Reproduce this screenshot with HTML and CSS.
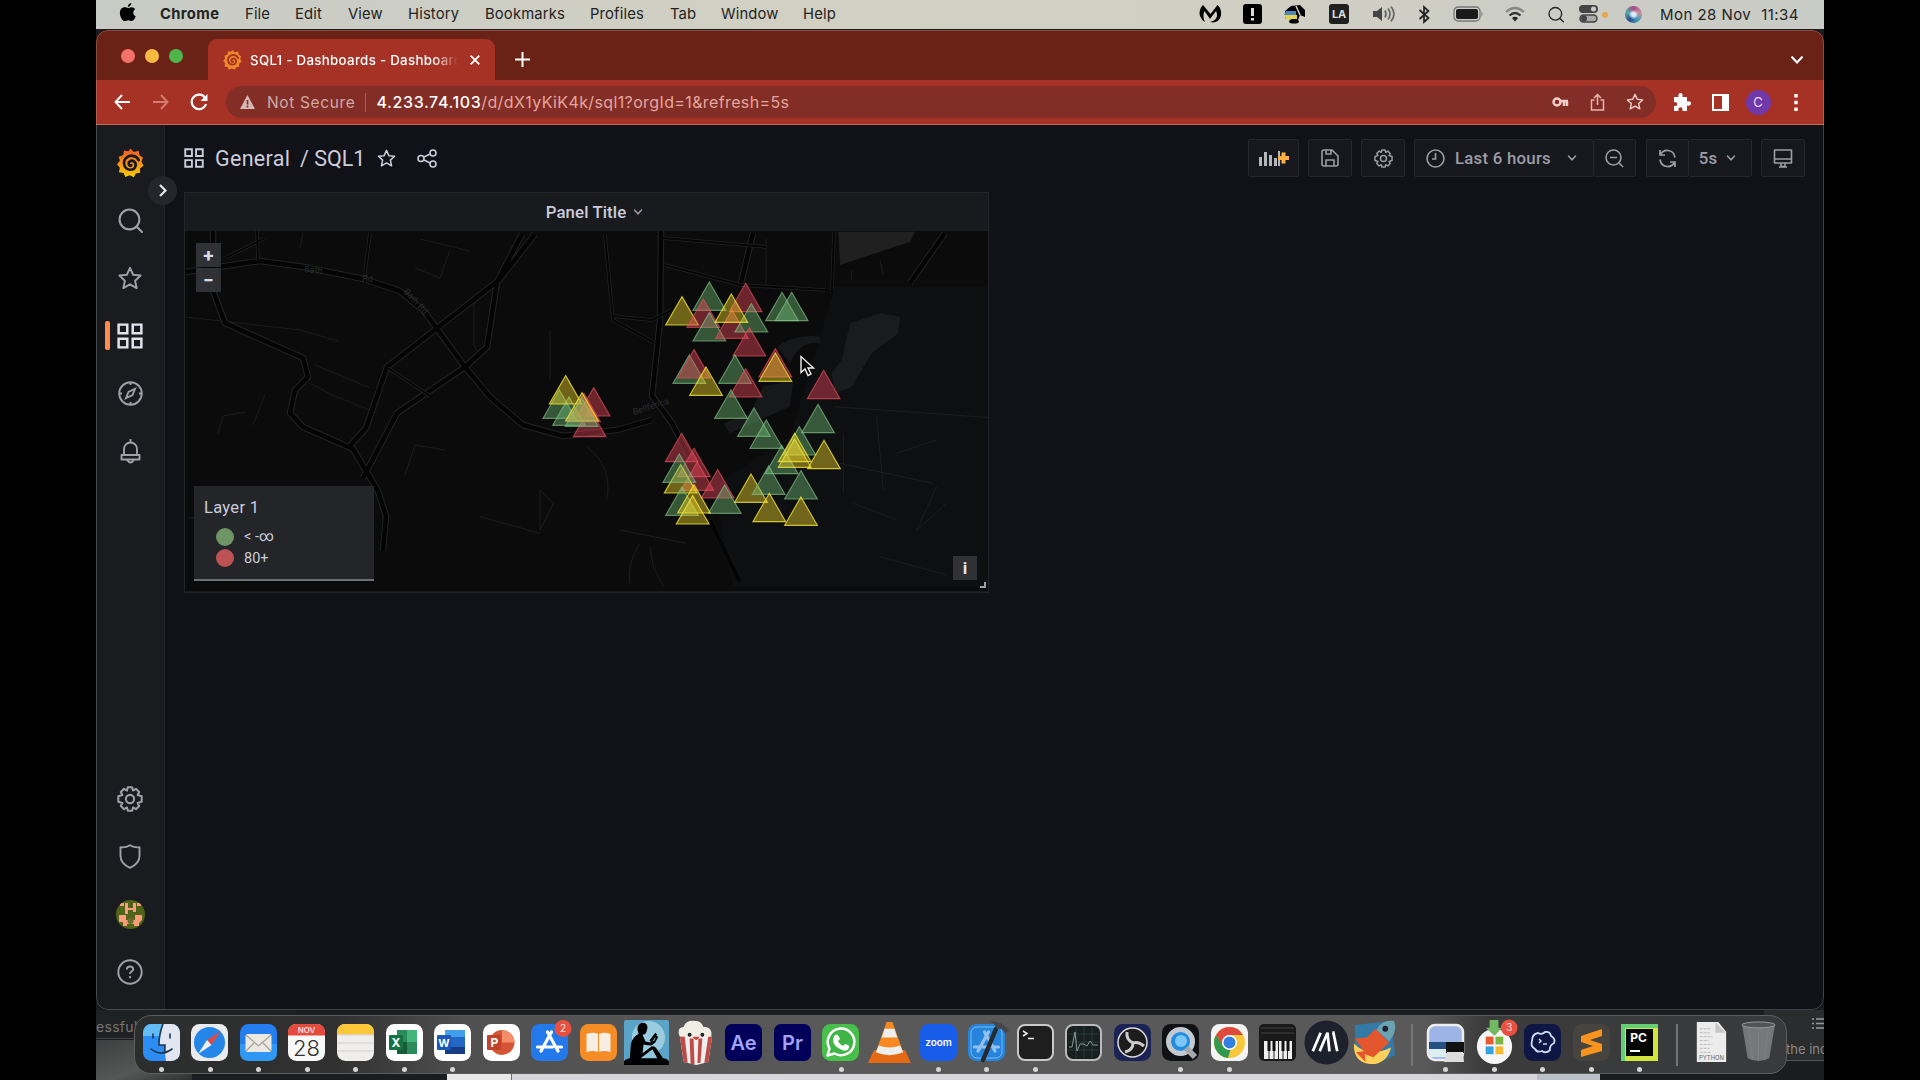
FILE: index.html
```html
<!DOCTYPE html>
<html lang="en">
<head>
<meta charset="utf-8">
<title>SQL1 - Dashboards - Dashboards</title>
<link rel="stylesheet" href="styles.css">
</head>
<body>
<svg width="0" height="0" class="defs">
  <defs>
    <linearGradient id="flame" x1="0" y1="0" x2="0" y2="1"><stop offset="0" stop-color="#f05a28"/><stop offset="1" stop-color="#fbca0a"/></linearGradient>
    <symbol id="grafana" viewBox="0 0 28 30">
      <path fill="url(#flame)" d="M14 0l3.400 3.600 5.200-1.200.7 4.600 3.600 2.300-1.500 4.200 2.200 4.300-3.800 2.800.3 4.600-4.600.6-2 4-4.300-2-4.600 1.800-1.800-4.200-4.800-.7 1-4.800-3-3.600 3-3.600L1.800 8.600l4.700-1.800.8-4.800 4.500.8z"/>
      <path fill="none" stroke="#17181c" stroke-width="2.800" stroke-linecap="round" d="M22.500 12C20 6.800 13 6 9.300 10c-4 4.300-1.800 11.500 4.500 12 5 .3 7.500-5.800 3.700-8.600-2.800-2-6.300.6-5 3.600.6 1.300 2 1.200 2.400.3"/>
    </symbol>
    <symbol id="grafana-tab" viewBox="0 0 28 30">
      <path fill="#ee8a2c" d="M14 0l3.400 3.600 5.200-1.200.7 4.600 3.600 2.300-1.500 4.200 2.200 4.300-3.800 2.800.3 4.600-4.600.6-2 4-4.300-2-4.600 1.800-1.800-4.200-4.800-.7 1-4.800-3-3.600 3-3.600L1.800 8.600l4.700-1.800.8-4.800 4.500.8z"/>
      <path fill="none" stroke="#a53225" stroke-width="2.800" stroke-linecap="round" d="M22.500 12C20 6.800 13 6 9.300 10c-4 4.300-1.800 11.500 4.500 12 5 .3 7.500-5.800 3.700-8.600-2.800-2-6.300.6-5 3.600.6 1.300 2 1.200 2.400.3"/>
    </symbol>
    <symbol id="star" viewBox="0 0 24 24"><path fill="none" stroke="currentColor" stroke-width="1.900" stroke-linejoin="round" d="M12 1.800l3 6.600 7.200.8-5.300 4.900 1.500 7.100L12 17.600l-6.400 3.600 1.500-7.100L1.800 9.200 9 8.400z"/></symbol>
    <symbol id="grid" viewBox="0 0 24 24"><path fill="none" stroke="currentColor" stroke-width="2.300" d="M1.500 1.500h8v8h-8zM14.500 1.500h8v8h-8zM1.500 14.500h8v8h-8zM14.500 14.500h8v8h-8z"/></symbol>
    <symbol id="search" viewBox="0 0 24 24"><g fill="none" stroke="currentColor" stroke-width="2" stroke-linecap="round"><circle cx="11" cy="11" r="9.500"/><path d="M18 18l5 5"/></g></symbol>
    <symbol id="down" viewBox="0 0 10 10"><path fill="none" stroke="currentColor" stroke-width="1.500" stroke-linecap="round" d="M1.500 3L5 6.800 8.500 3"/></symbol>
    <symbol id="gear" viewBox="0 0 24 24"><g fill="none" stroke="currentColor" stroke-width="1.900" stroke-linejoin="round"><circle cx="12" cy="12" r="3.800"/><path d="M10 1.200h4l.8 3 2.700-1.600 3 3L19 8.300l3.800 1.200v5L19 15.700l1.500 2.700-3 3-2.700-1.600-.8 3h-4l-.8-3-2.700 1.600-3-3L5 15.700 1.200 14.500v-5L5 8.300 3.500 5.600l3-3 2.700 1.600z"/></g></symbol>
    <symbol id="appstore" viewBox="0 0 37 37"><g stroke="#fff" stroke-width="3.200" stroke-linecap="round"><path d="M20.500 8L10 27M16.500 8L27 27M6.500 23h15M26 23h4.500"/></g></symbol>
    <path id="tri" d="M0 2L49 87H-49z"/>
  </defs>
</svg>

<div class="screen">
  <div class="backdrop">
    <div class="behind-left"><span>essful</span></div>
    <div class="behind-wall"></div>
    <div class="behind-sheet"></div>
    <div class="behind-right">
      <svg width="12" height="14" viewBox="0 0 12 14"><path stroke="#999" stroke-width="1.500" d="M0 2h2M4 2h8M0 6.500h2M4 6.500h8M0 11h2M4 11h8"/></svg>
      <span>the inc</span>
    </div>
  </div>

  <header class="menubar">
    <svg class="apple" width="18" height="19" viewBox="0 0 18 19"><path d="M12.300 0c.2 1.700-1.400 3.800-3.400 3.900C8.600 2.200 10.300.2 12.300 0zM9 5c.9 0 1.900-.9 3.500-.8 1.700.1 3 .8 3.700 2-3 1.900-2.400 5.800.6 7-.8 2.100-2.300 4.700-4 4.800-1.300.1-1.900-.8-3.500-.8s-2.200.8-3.500.8C3.200 18 .9 13.300.9 9.900c0-3.600 2.300-5.500 4.500-5.600C6.900 4.200 8.100 5 9 5z"/></svg>
    <nav class="menus"><b>Chrome</b><span>File</span><span>Edit</span><span>View</span><span>History</span><span>Bookmarks</span><span>Profiles</span><span>Tab</span><span>Window</span><span>Help</span></nav>
    <div class="status">
      <svg width="23" height="20" viewBox="0 0 23 20"><path d="M4 1C1 4-.5 9 1.500 13c1 2 2.500 4 4.500 5C4 14 4 10 5.500 7l5.500 8 6-8c2 4 1 8-3 10l-3 1c5 1.500 9-1 10.500-5C23 9 22 4 18.500 1l-7 9z"/></svg>
      <svg width="19" height="20" viewBox="0 0 19 20"><rect width="19" height="20" rx="3"/><path stroke="#ddd" stroke-width="3" d="M9.500 4v8M9.500 14v2.500"/></svg>
      <svg width="23" height="20" viewBox="0 0 23 20"><path d="M8 2l9-1 5 5v7l-5-2-2 5h-5l-8-2V7z"/><path fill="#4e84bd" d="M3 7h10v4H1z"/><path fill="#e5d34c" d="M1 11h13v4H3z"/><path stroke="#d0d0c5" stroke-width="1.500" d="M13 2l4 9"/><ellipse cx="11" cy="17.500" rx="5" ry="2"/></svg>
      <span class="la">LA</span>
      <svg width="24" height="18" viewBox="0 0 24 18"><path fill="#444" d="M1 6h4l5-4v14l-5-4H1z"/><path fill="none" stroke="#666" stroke-width="1.700" d="M13 5.500q2 3.500 0 7M16 3.500q4 5.500 0 11M19 1.500q6 7.500 0 15"/></svg>
      <svg width="12" height="19" viewBox="0 0 12 19"><path fill="none" stroke="#222" stroke-width="1.700" d="M1.500 5l9 8-4.500 4V2l4.500 4-9 8"/></svg>
      <svg width="31" height="16" viewBox="0 0 31 16"><rect x="1" y="1" width="26" height="14" rx="4" fill="none" stroke="#777" stroke-width="1.300"/><rect x="3" y="3" width="22" height="10" rx="2" fill="#1a1a1a"/><path fill="#777" d="M28.500 5q2 3 0 6z"/></svg>
      <svg width="20" height="15" viewBox="0 0 20 15"><g fill="none" stroke-width="2.200"><path stroke="#888" d="M1 5q9-8 18 0"/><path stroke="#333" d="M4.500 8.500q5.500-5 11 0"/></g><path fill="#222" d="M7 11q3-2.500 6 0l-3 3.500z"/></svg>
      <svg width="16" height="17" class="spotlight"><use href="#search"/></svg>
      <svg width="30" height="18" viewBox="0 0 30 18"><rect x="0" y="0" width="19" height="8" rx="4" fill="#444"/><circle cx="14.500" cy="4" r="2.500" fill="#ccc"/><rect x="1" y="10" width="17" height="7" rx="3.500" fill="#aaa" stroke="#444" stroke-width="1.500"/><circle cx="5" cy="13.500" r="3" fill="#444"/><circle cx="26" cy="10" r="3" fill="#e4a64c"/></svg>
      <i class="siri"></i>
      <span class="clock"><span>Mon 28 Nov</span><span>11:34</span></span>
    </div>
  </header>

  <main class="window">
    <div class="tabstrip">
      <div class="lights"><i></i><i></i><i></i></div>
      <div class="tab">
        <svg width="19" height="20"><use href="#grafana-tab"/></svg>
        <span>SQL1 - Dashboards - Dashboards</span>
        <svg width="10" height="10" viewBox="0 0 10 10"><path stroke="#fff" stroke-width="1.800" d="M.7.700l8.600 8.600M9.300.700L.7 9.300"/></svg>
      </div>
      <svg class="plus" width="15" height="15" viewBox="0 0 15 15"><path stroke="#fff" stroke-width="2" d="M7.500 0v15M0 7.500h15"/></svg>
      <svg class="tabs-menu" width="14" height="14"><use href="#down"/></svg>
    </div>
    <div class="toolbar">
      <svg width="17" height="16" viewBox="0 0 17 16"><path fill="none" stroke="#fff" stroke-width="1.900" d="M8 1L1.500 8 8 15M1.500 8H16"/></svg>
      <svg width="17" height="16" viewBox="0 0 17 16"><path fill="none" stroke="#d17d72" stroke-width="1.900" d="M9 1l6.500 7L9 15M15.500 8H1"/></svg>
      <svg width="18" height="18" viewBox="0 0 18 18"><path fill="none" stroke="#fff" stroke-width="2.200" d="M15.500 5.500A7.300 7.300 0 1 0 16 11"/><path fill="#fff" d="M17.500 1v7h-7z"/></svg>
      <div class="address">
        <svg width="15" height="14" viewBox="0 0 15 14"><path fill="#d6bab6" d="M7.500 0L15 14H0z"/><path stroke="#822d25" stroke-width="1.700" d="M7.500 5v4.500M7.500 10.500v2"/></svg>
        <span class="insecure">Not Secure</span><i></i>
        <span class="url"><b>4.233.74.103</b>/d/dX1yKiK4k/sql1?orgId=1&amp;refresh=5s</span>
        <div class="address-icons">
          <svg width="17" height="12" viewBox="0 0 17 12"><g fill="none" stroke="#f0cdc8" stroke-width="2.500"><circle cx="5" cy="6" r="3.500"/><path d="M8 5h8M12 5v5M15 5v5"/></g></svg>
          <svg width="15" height="18" viewBox="0 0 15 18"><path fill="none" stroke="#e9b4ad" stroke-width="1.500" d="M4.500 7H1.500v10h12V7h-3M7.500 12V1.500M4 5l3.500-3.500L11 5"/></svg>
          <svg width="18" height="18"><use href="#star"/></svg>
        </div>
      </div>
      <svg width="18" height="18" viewBox="0 0 18 18"><path fill="#fff" d="M1 4h4.500C5 1 6 0 7.500 0S10 1 9.500 4H14v4.500c3-.5 4 .5 4 2s-1 2.500-4 2V18h-4.500c.3-3-.5-3.700-2-3.700s-2.300.7-2 3.700H1v-5c2.500.3 3.300-.8 3.300-2S3.500 9 1 9z"/></svg>
      <svg width="17" height="17" viewBox="0 0 17 17"><path fill="none" stroke="#fff" stroke-width="2" d="M1 1h15v15H1z"/><path fill="#fff" d="M10 1h6v15h-6z"/></svg>
      <span class="profile">C</span>
      <svg width="4" height="17" viewBox="0 0 4 17"><path fill="#fff" d="M.3 0h3.400v3.500H.3zM.3 6.700h3.400v3.500H.3zM.3 13.500h3.400V17H.3z"/></svg>
    </div>

    <div class="app">
      <aside class="sidebar">
        <div><svg width="27" height="30"><use href="#grafana"/></svg><span class="expand"><svg width="8" height="13" viewBox="0 0 8 13"><path fill="none" stroke="#e6e6ea" stroke-width="2.200" d="M1 1l5.500 5.500L1 12"/></svg></span></div>
        <div><svg width="25" height="25"><use href="#search"/></svg></div>
        <div><svg width="26" height="25"><use href="#star"/></svg></div>
        <div class="current"><svg width="26" height="26"><use href="#grid"/></svg></div>
        <div><svg width="25" height="25" viewBox="0 0 25 25"><g fill="none" stroke="currentColor" stroke-width="1.900"><circle cx="12.500" cy="12.500" r="11.300"/><path d="M12.500 1v3M12.500 21v3M1 12.500h3M21 12.500h3M17 8l-2.500 6-6.500 3 2.500-6z"/></g></svg></div>
        <div><svg width="21" height="25" viewBox="0 0 21 25"><path fill="none" stroke="currentColor" stroke-width="1.900" stroke-linejoin="round" d="M10.500 0v3M4 15.500V10a6.500 6.500 0 0 1 13 0v5.500M1.500 16h18v4.500h-18zM7 21q3.500 5 7 0"/></svg></div>
        <div class="push"><svg width="26" height="26"><use href="#gear"/></svg></div>
        <div><svg width="22" height="25" viewBox="0 0 22 25"><path fill="none" stroke="currentColor" stroke-width="1.900" stroke-linejoin="round" d="M11 1.300q4 2.500 9.500 2v8.500q0 8-9.500 12-9.500-4-9.500-12V3.300q5.500.5 9.500-2z"/></svg></div>
        <div><svg class="round" width="29" height="29" viewBox="0 0 29 29"><path fill="#4f6418" d="M0 0h29v29H0z"/><path fill="#f79f7d" d="M4 3h4v3H4zM9 3h3v5h5V3h3v9h-3v-2h-5v4H9zM21 3h4v3h-4zM3 15h7v5h9v-5h7v5l-3 3v3h-5v-2h-7v2H7v-4H3z"/><circle cx="14.500" cy="21" r="3" fill="#6d6b27"/></svg></div>
        <div><svg width="26" height="26" viewBox="0 0 26 26"><g fill="none" stroke="currentColor" stroke-width="1.900"><circle cx="13" cy="13" r="11.700"/><path d="M9.800 10.500c0-4 6.400-4 6.400-.3 0 2.300-3.200 2-3.200 4.800M13 17v2.300"/></g></svg></div>
      </aside>

      <section class="content">
        <div class="topbar">
          <div class="crumbs">
            <svg width="20" height="20"><use href="#grid"/></svg>
            <span class="folder">General</span><span class="dash">/ SQL1</span>
            <svg width="19" height="19"><use href="#star"/></svg>
            <svg width="20" height="19" viewBox="0 0 20 19"><g fill="none" stroke="currentColor" stroke-width="1.600"><circle cx="4" cy="9.500" r="3"/><circle cx="16" cy="4" r="3"/><circle cx="16" cy="15" r="3"/><path d="M7 8l6-3M7 11l6 3"/></g></svg>
          </div>
          <div class="actions">
            <span class="btn add"><svg width="30" height="18" viewBox="0 0 30 18"><path fill="#b5b6bb" d="M0 8h3v9H0zM5 3h3v14H5zM10 6h3v11h-3zM15 9h3v8h-3zM19 2h2v15h-2z"/><path stroke="#ffad45" stroke-width="4" d="M24.500 3.500v11M19 9h11"/></svg></span>
            <span class="btn"><svg width="18" height="18" viewBox="0 0 18 18"><path fill="none" stroke="currentColor" stroke-width="1.600" stroke-linejoin="round" d="M1 3q0-2 2-2h8l6 6v8q0 2-2 2H3q-2 0-2-2zM5 1v4h5V1M5 17v-6h8v6"/></svg></span>
            <span class="btn"><svg width="19" height="19"><use href="#gear"/></svg></span>
            <span class="btn time"><svg width="19" height="19" viewBox="0 0 19 19"><g fill="none" stroke="currentColor" stroke-width="1.600"><circle cx="9.500" cy="9.500" r="8.500"/><path d="M9.500 4v6H6"/></g></svg><b>Last 6 hours</b><svg width="10" height="10"><use href="#down"/></svg></span>
            <span class="btn joined"><svg width="19" height="19" viewBox="0 0 19 19"><g fill="none" stroke="currentColor" stroke-width="1.600"><circle cx="8.500" cy="8.500" r="7.500"/><path d="M5 8.500h7M14 14l4 4"/></g></svg></span>
            <span class="btn refresh"><svg width="19" height="19" viewBox="0 0 19 19"><path fill="none" stroke="currentColor" stroke-width="1.700" d="M2 1v5h5M2 6q3-5 8-4.500 6 .5 7 7M17 18v-5h-5M17 13q-3 5-8 4.500-6-.5-7-7"/></svg></span>
            <span class="btn joined rate"><b>5s</b><svg width="10" height="10"><use href="#down"/></svg></span>
            <span class="btn"><svg width="20" height="19" viewBox="0 0 20 19"><path fill="none" stroke="currentColor" stroke-width="1.600" stroke-linejoin="round" d="M1.500 1h17v13h-17zM1.500 10h17M8 14v3.500h4V14M6 18h8"/></svg></span>
          </div>
        </div>

        <article class="panel">
          <h2>Panel Title <svg width="10" height="10"><use href="#down"/></svg></h2>
          <div class="map">
            <svg class="tiles" viewBox="185 231 803 360" width="803" height="360">
              <rect x="185" y="231" width="803" height="360" fill="#0b0b0c"/>
              <g transform="translate(480 220) scale(.33333)">
                <path fill="#0e0f10" d="M1065 200h500v900H760l-60-300 230-150z"/>
                <path fill="#202021" d="M1075 35h230l-15 30-210 70z"/>
                <path fill="#1a1b1c" d="M1110 310l90-30 60 10-5 50-80 60-60 100-50 20-10-60 30-40z"/>
                <path fill="#17181a" d="M850 500l90-20-10 80-90 40-90 40-20-30 80-30zM890 380q60-40 130-30v20q-60-10-90 60z"/>
                <path fill="none" stroke="#1c1d1d" stroke-width="3" d="M1200 120l10 45M1115 150v30M1060 560l500 35M1080 730l280 60M1090 640v180M1190 590l20 220M1370 800l-60 130 90-80M1200 1010l200 55M1250 700l120-40M1120 850l130 50M180 810v120l40-80zM0 890l180 50M420 930l200 40M320 680q80 60 60 160M480 970q-40 60-30 120M510 980l10 60 30 60"/>
              </g>
              <path fill="none" stroke="#1b1c1c" d="M185 317l45 5 70 8 38 11M315 365l55 23M218 434l5-18 22-4M188 518h30M300 248l3-15M420 239l50 12M450 250l-10 28-25-10M405 475l10-30 30 5M310 383l22 12 45 18M265 395l-12 30M474 300v45l5 10M766 239v48M550 330v50"/>
              <g fill="none" stroke-linejoin="round">
                <g stroke="#222323" stroke-width="6.500">
                  <path d="M185 272l40-6 35-5 44 6 60 12 36 12 24 20 41 56 25 30 33 28 40 11 54-6 35-10M213 231v60l12 32 78 35 5 19-13 13-5 23 13 14 50 22 25 42 8 25-3 35M348 448l18-20 21-61 112-87 36-46M363 478l34-65 68-46 22-20 10-65 25-48M661 231l-1 90-8 75 20 27 18 35M753 233l-12 50M945 233l-35 50"/>
                  <path d="M710 520l20 42 10 20" stroke-width="5"/>
                </g>
                <path stroke="#040404" stroke-width="4.500" d="M185 272l40-6 35-5 44 6 60 12 36 12 24 20 41 56 25 30 33 28 40 11 54-6 35-10M213 231v60l12 32 78 35 5 19-13 13-5 23 13 14 50 22 25 42 8 25-3 35M348 448l18-20 21-61 112-87 36-46M363 478l34-65 68-46 22-20 10-65 25-48M661 231l-1 90-8 75 20 27 18 35M753 233l-12 50M945 233l-35 50M710 520l20 42 10 20"/>
                <path stroke="#212222" stroke-width="3.500" d="M605 235l8 85 40 22M612 316l40 4 20-10M663 238l103 9M665 265l75 20 85 5M225 258l40-20M258 261l-1-30M370 233l-5 40M388 368l42 28M834 232l-2 58"/>
                <path stroke="#050505" stroke-width="2" d="M605 235l8 85 40 22M612 316l40 4 20-10M663 238l103 9M665 265l75 20 85 5M225 258l40-20M258 261l-1-30M370 233l-5 40M388 368l42 28M834 232l-2 58"/>
              </g>
              <g class="roadnames"><text x="304" y="272" transform="rotate(6 304 272)">Bath</text><text x="362" y="281" transform="rotate(6 362 281)">Rd</text><text x="403" y="292" transform="rotate(47 403 292)">Bath Rd</text><text x="634" y="415" transform="rotate(-18 634 415)">Bellferica</text></g>
              <g class="markers" transform="translate(480 220) scale(.33333)">
                <g class="g"><use href="#tri" x="688" y="184"/></g>
                <g class="y"><use href="#tri" x="606" y="228"/></g>
                <g class="r"><use href="#tri" x="670" y="235"/><use href="#tri" x="797" y="188"/></g>
                <g class="g"><use href="#tri" x="688" y="276"/></g>
                <g class="r"><use href="#tri" x="756" y="268"/></g>
                <g class="g"><use href="#tri" x="814" y="249"/><use href="#tri" x="906" y="215"/><use href="#tri" x="935" y="215"/></g>
                <g class="y"><use href="#tri" x="754" y="220"/></g>
                <g class="r"><use href="#tri" x="808" y="321"/></g>
                <g class="g"><use href="#tri" x="628" y="403"/><use href="#tri" x="765" y="403"/></g>
                <g class="r"><use href="#tri" x="642" y="387"/><use href="#tri" x="797" y="444"/><use href="#tri" x="886" y="384"/><use href="#tri" x="1031" y="449"/></g>
                <g class="y"><use href="#tri" x="678" y="439"/><use href="#tri" x="886" y="397"/></g>
                <g class="g"><use href="#tri" x="753" y="508"/><use href="#tri" x="822" y="562"/><use href="#tri" x="859" y="598"/><use href="#tri" x="1014" y="551"/><use href="#tri" x="958" y="618"/><use href="#tri" x="905" y="674"/></g>
                <g class="y"><use href="#tri" x="944" y="655"/><use href="#tri" x="944" y="638"/><use href="#tri" x="1032" y="659"/></g>
                <g class="r"><use href="#tri" x="605" y="638"/><use href="#tri" x="642" y="683"/><use href="#tri" x="652" y="724"/><use href="#tri" x="713" y="747"/></g>
                <g class="y"><use href="#tri" x="602" y="732"/></g>
                <g class="g"><use href="#tri" x="598" y="700"/><use href="#tri" x="606" y="799"/><use href="#tri" x="734" y="793"/></g>
                <g class="y"><use href="#tri" x="642" y="792"/><use href="#tri" x="638" y="825"/><use href="#tri" x="813" y="760"/></g>
                <g class="g"><use href="#tri" x="866" y="736"/><use href="#tri" x="963" y="750"/></g>
                <g class="y"><use href="#tri" x="868" y="818"/><use href="#tri" x="963" y="829"/></g>
                <g class="g"><use href="#tri" x="238" y="508"/><use href="#tri" x="267" y="529"/></g>
                <g class="y"><use href="#tri" x="257" y="465"/></g>
                <g class="r"><use href="#tri" x="341" y="501"/><use href="#tri" x="329" y="563"/></g>
                <g class="r"><use href="#tri" x="312" y="518"/></g>
                <g class="y"><use href="#tri" x="306" y="516"/></g>
                <g class="g"><use href="#tri" x="305" y="532"/></g>
              </g>
            </svg>
            <div class="zoomer"><span>+</span><span>−</span></div>
            <div class="legend"><h3>Layer 1</h3><p><i class="green"></i>&lt; -∞</p><p><i class="red"></i>80+</p></div>
            <div class="info">i</div>
            <i class="resize"></i>
            <svg class="cursor" width="15" height="22" viewBox="0 0 15 22"><path fill="#080808" stroke="#eee" stroke-width="1.400" d="M1 1.500v16l4-3.500 3 6.500 3-1.500-3-6h5.500z"/></svg>
          </div>
        </article>
      </section>
    </div>
  </main>

  <footer class="dock">
    <div class="on"><svg viewBox="0 0 37 37"><clipPath id="rc"><rect width="37" height="37" rx="8.500"/></clipPath><g clip-path="url(#rc)"><path fill="#2b8cf3" d="M0 0h37v37H0z"/><path fill="#62bdf7" d="M0 0h21v12H0z"/><path fill="#e2e6f2" d="M20 0q-4 10-4 21h6q-.3 9 1 16h14V0z"/><path fill="none" stroke="#203650" stroke-width="1.600" stroke-linecap="round" d="M8 25q10 8 21 0M10 10v4M27 10v4M20 0q-4 10-4 21h6q-.3 5 0 8"/></g></svg></div>
    <div class="on"><svg viewBox="0 0 37 37"><rect width="37" height="37" rx="8.500" fill="#e9ebee"/><circle cx="18.500" cy="18.500" r="15.500" fill="#2486e9"/><path fill="#e04a44" d="M30 7L16 16l4.500 5z"/><path fill="#f0f0f0" d="M7 30l9-14 4.500 5z"/></svg></div>
    <div class="on"><svg viewBox="0 0 37 37"><rect width="37" height="37" rx="8.500" fill="#257ef0"/><path fill="#38b2f8" opacity=".5" d="M0 20h37v9q0 8-8 8H8q-8 0-8-8z"/><rect x="5.500" y="10" width="26" height="18" rx="2" fill="#ece8e2"/><path fill="none" stroke="#a7a29a" stroke-width="1.200" d="M6 11l12.500 11L31 11M6 27l8-8M31 27l-8-8"/></svg></div>
    <div class="on"><svg viewBox="0 0 37 37"><rect width="37" height="37" rx="8.500" fill="#f8f8f8"/><path fill="#e54a3f" d="M0 11.500V8.500Q0 0 8.500 0h20Q37 0 37 8.500v3z"/><text x="18.500" y="9" font-size="8" fill="#ffe4df" font-weight="600">NOV</text><text x="18.500" y="31.500" font-size="22" fill="#333" font-weight="300">28</text></svg></div>
    <div class="on"><svg viewBox="0 0 37 37"><rect width="37" height="37" rx="8.500" fill="#efeeec"/><path fill="#fbc637" d="M0 10.500v-2Q0 0 8.500 0h20Q37 0 37 8.500v2z"/><path stroke="#d2d0ce" d="M0 11h37M0 19h37M0 27h37"/></svg></div>
    <div class="on"><svg viewBox="0 0 37 37"><rect width="37" height="37" rx="8.500" fill="#fff"/><path fill="#2a8b5b" d="M11 6h20v24H11z"/><path fill="#43b57b" d="M21 6h10v12H21z"/><path fill="#185c37" d="M11 18h10v12H11z"/><rect x="3" y="11" width="14" height="15" rx="1" fill="#157243"/><text x="10" y="23" font-size="12" fill="#fff" font-weight="700">X</text></svg></div>
    <div class="on"><svg viewBox="0 0 37 37"><rect width="37" height="37" rx="8.500" fill="#fff"/><path fill="#2368c6" d="M11 6h20v24H11z"/><path fill="#41a1e8" d="M11 6h20v7H11z"/><path fill="#153f82" d="M11 23h20v7H11z"/><rect x="3" y="11" width="14" height="15" rx="1" fill="#1b58b7"/><text x="10" y="22.500" font-size="11" fill="#fff" font-weight="700">W</text></svg></div>
    <div><svg viewBox="0 0 37 37"><rect width="37" height="37" rx="8.500" fill="#fff"/><circle cx="19" cy="18.500" r="12.500" fill="#d55433"/><path fill="#f48d6a" d="M19 6a12.500 12.500 0 0 1 12.500 12.500H19z"/><rect x="4" y="11" width="14" height="15" rx="1" fill="#c0432a"/><text x="11.500" y="23" font-size="12" fill="#fff" font-weight="700">P</text></svg></div>
    <div><svg viewBox="0 0 37 37"><rect width="37" height="37" rx="8.500" fill="#2379ea"/><use href="#appstore"/><circle cx="32" cy="4.500" r="8.500" fill="#e8503f"/><text x="32" y="8" font-size="10" fill="#ffe5e0">2</text></svg></div>
    <div><svg viewBox="0 0 37 37"><rect width="37" height="37" rx="8.500" fill="#f58c25"/><path fill="#f6eee5" d="M6.500 10q7-2.500 11.500 0v18q-5-2-11.500 0zM19 10q5-2.500 11.500 0v18q-7-2-11.500 0z"/></svg></div>
    <div><svg class="big" viewBox="0 0 46 46"><rect width="46" height="46" rx="2" fill="#5ba4c9"/><circle cx="25" cy="18" r="17" fill="#9acce0"/><path d="M0 42q3-3 6-3l1-14q1-7 8-11-2-3-1-7 2-5 7-4 3 1 3 5l-1 4q-1 3-4 3l3 7 5 1 4-2 2-5 2 1-3 6-4 3q-4 0-8-1l-1 9 9-7q3-1 5 2l7 10q6 1 6 4v3H0zM26 21l6-8 2 2-6 8z"/><path fill="#90c5de" d="M17 39l12-9 5 9z"/></svg></div>
    <div><svg class="big" viewBox="0 0 46 46"><path fill="#f0eee4" d="M7 17q-4-9 4-10 2-7 12-6 6 0 8 6 10 0 8 11z"/><path fill="#eee" d="M7 17h33l-4 26-12 3-13-3z"/><path fill="#bf4b47" d="M7 17h5l3 27-4-1zM17 19h4l1 26h-4zM26 19h4l-2 25h-3zM36 17h4l-4 26-4 1z"/><g fill="#222"><circle cx="17" cy="15" r="2"/><circle cx="30" cy="15" r="2"/></g><path fill="#d3443d" d="M20 17h7q-3 7-7 0z"/></svg></div>
    <div><svg viewBox="0 0 37 37"><rect width="37" height="37" rx="7" fill="#00005b"/><text x="18.500" y="25.500" font-size="20" fill="#a3a3f8" font-weight="600">Ae</text></svg></div>
    <div><svg viewBox="0 0 37 37"><rect width="37" height="37" rx="7" fill="#00005b"/><text x="18.500" y="25.500" font-size="20" fill="#a3a3f8" font-weight="600">Pr</text></svg></div>
    <div class="on"><svg viewBox="0 0 37 37"><rect width="37" height="37" rx="8.500" fill="#48bf4b"/><path fill="#40b447" stroke="#fff" stroke-width="2.500" stroke-linejoin="round" d="M5.500 31.500l2-7a13.300 13.300 0 1 1 5 5z"/><path fill="#fff" d="M13 11q3-2 5 4l-2 2q2 4 5 5l2-2q5 1 4 4-2 4-7 2-9-4-9-10 0-3 2-5z"/></svg></div>
    <div><svg class="big" viewBox="0 0 46 46"><path fill="#e66a15" d="M7 31h32l6 13H1z"/><path fill="#f68a20" d="M20 2h6l11 31q-14 6-28 0z"/><path fill="#eee" d="M18 9h10l3 9H15zM12 26q11 4 22 0l3 7q-14 6-28 0z"/></svg></div>
    <div class="on"><svg viewBox="0 0 37 37"><rect width="37" height="37" rx="8.500" fill="#175dea"/><text x="18.500" y="22" font-size="10" fill="#fff" font-weight="600">zoom</text></svg></div>
    <div class="on"><svg viewBox="0 0 37 37"><rect width="37" height="37" rx="8.500" fill="#2784dc"/><rect x="3" y="3" width="31" height="31" rx="6" fill="none" stroke="#75bdf0"/><use href="#appstore" opacity=".5"/><path stroke="#252a30" stroke-width="4.500" stroke-linecap="round" d="M15 36L28 5"/><path fill="#44484e" d="M22-3q13 0 19 10l-4 2q-3-5-8-4l-3-5z"/></svg></div>
    <div class="on"><svg viewBox="0 0 37 37"><rect x="1" y="1" width="35" height="35" rx="7" fill="#1e1e1e" stroke="#c9c9c9" stroke-width="2"/><path fill="none" stroke="#eee" stroke-width="1.500" d="M6 7l4 2.500L6 12M11 14.500h6"/></svg></div>
    <div><svg viewBox="0 0 37 37"><rect x="1" y="1" width="35" height="35" rx="7" fill="#17201e" stroke="#bbb" stroke-width="2"/><path stroke="#304642" stroke-width=".7" d="M3 10h31M3 18h31M3 26h31M11 3v31M19 3v31M27 3v31"/><path fill="none" stroke="#7f9c94" stroke-width="1" d="M4 23h3l3-15 2 19 3-7h4l3 2 3-5 3 4h5"/></svg></div>
    <div><svg viewBox="0 0 37 37"><rect width="37" height="37" rx="8.500" fill="#1b2254"/><circle cx="18.500" cy="18.500" r="14.500" fill="#1c1c1d" stroke="#ddd" stroke-width="1.500"/><path fill="none" stroke="#ccc" stroke-width="3" d="M13 8q-1 8 6 11 5-2 11 3M19 19q0 7-8 9"/></svg></div>
    <div class="on"><svg viewBox="0 0 37 37"><rect width="37" height="37" rx="8.500" fill="#101115"/><circle cx="18.500" cy="17.500" r="12" fill="#258de0" stroke="#c4cad1" stroke-width="5"/><circle cx="19" cy="17" r="6" fill="#7cc8f5"/><path stroke="#a4a9af" stroke-width="6" d="M24 24l9 9"/></svg></div>
    <div class="on"><svg viewBox="0 0 37 37"><rect width="37" height="37" rx="8.500" fill="#f4f4f4"/><circle cx="18.500" cy="18.500" r="15.500" fill="#f8c83c"/><path fill="#de4a3d" d="M5 11A15.500 15.500 0 0 1 32 11H18.500L11 21z"/><path fill="#319850" d="M5 11l8 13 7 0-3 10A15.500 15.500 0 0 1 5 11z"/><circle cx="18.500" cy="18.500" r="7.500" fill="#fff"/><circle cx="18.500" cy="18.500" r="6" fill="#327fe0"/></svg></div>
    <div><svg viewBox="0 0 37 37"><rect width="37" height="37" rx="5" fill="#19191a"/><path fill="#efefef" d="M5 17h28v18H5z"/><path stroke="#222" d="M10 17v18M15 17v18M19.500 17v18M24 17v18M28.500 17v18"/><path stroke="#111" stroke-width="3" d="M10 16v11M15 16v11M24 16v11M29 16v11"/><path stroke="#444" d="M2 4h33M2 9h33"/></svg></div>
    <div><svg class="big" viewBox="0 0 46 46"><circle cx="23" cy="23" r="22.500" fill="#1c212c"/><path fill="none" stroke="#fff" stroke-width="2.800" d="M9 32l8-19M16 32l8-19 2 19M29 13h1l4 19"/></svg></div>
    <div><svg class="big" viewBox="0 0 46 46"><path fill="#347aa7" d="M3 5l37-4 4 35-19 8L3 32z"/><path fill="#ffd15b" d="M2 24q14 15 38 4-5 18-22 17Q1 43 2 24z"/><path fill="#e4562e" d="M24 9l14 14-16 15-9-3 1 8L4 33l8-1-9-13 12-1z"/><path fill="#6ba3b1" d="M25 10Q31-1 43 1q4 10-5 21z"/><circle cx="34" cy="9" r="3" fill="#223"/></svg></div>
    <hr>
    <div class="on"><svg viewBox="0 0 37 37"><rect x="1" y="1" width="35" height="35" rx="7" fill="#9db4e6" stroke="#eee" stroke-width="2.500"/><path fill="#244f80" d="M2 18h33v8H2z"/><path fill="#dee" d="M2 25h33v8H3z"/><path fill="#111" d="M19 18h18v11H19z"/><path fill="#ddd" d="M20 28h16l1 10H17z"/></svg></div>
    <div class="on"><svg class="big" viewBox="0 0 46 46"><circle cx="23" cy="27" r="18" fill="#f6f6f6"/><path fill="#e65b30" d="M14 17h8v8h-8z"/><path fill="#7db73f" d="M24 17h8v8h-8z"/><path fill="#32a2df" d="M14 27h8v8h-8z"/><path fill="#f7b930" d="M24 27h8v8h-8z"/><path fill="#73b964" d="M18 0h9v8h4l-8 8-9-8h4z"/><circle cx="38" cy="8" r="8.500" fill="#e8503f"/><text x="38" y="11.500" font-size="10" fill="#ffe5e0">3</text></svg></div>
    <div class="on"><svg viewBox="0 0 37 37"><rect width="37" height="37" rx="8.500" fill="#0e1644"/><path fill="none" stroke="#c9def4" stroke-width="1.800" d="M14 9q4 2 7-1 5-1 6 4 5 3 3 7-5 3-4 7-4 4-8 1-5 2-7-2-5-3-3-8 0-7 6-8z"/><path fill="none" stroke="#c9def4" stroke-width="1.500" d="M15 15l2 2-2 2M19 20h4"/></svg></div>
    <div class="on"><svg viewBox="0 0 37 37"><rect width="37" height="37" rx="8.500" fill="#47433f"/><path fill="#f7941e" d="M8 12l21-7v7l-12 4 12 4v7L8 33v-7l12-4-12-4z"/></svg></div>
    <div class="on"><svg viewBox="0 0 37 37"><path fill="#d0e63f" d="M0 0h37v37H0z"/><path fill="#64cf73" d="M0 0h37v4H4v33H0z"/><path fill="#050705" d="M5 5h27v27H5z"/><text x="17.500" y="18" font-size="12" fill="#fff" font-weight="700">PC</text><path stroke="#fff" stroke-width="2" d="M9 27h10"/></svg></div>
    <hr>
    <div><svg class="big" viewBox="0 0 46 46"><path fill="#ececec" d="M9 2h22l8 10v31H9z"/><path fill="#c6c6c6" d="M28 2l10 11H28z"/><path stroke="#bbb" stroke-dasharray="3 1" d="M12 9h12M12 13h10M12 17h13M12 21h9M12 25h13M12 29h10M12 33h12"/><text x="24" y="41" font-size="6" fill="#666">PYTHON</text></svg></div>
    <div><svg class="big" viewBox="0 0 46 46"><path fill="#74787a" d="M6 4h34l-6 35q-11 6-22 0z"/><ellipse cx="23" cy="5" rx="17" ry="3" fill="#515456" stroke="#979a9c"/><path stroke="#7d8183" d="M13 10l4 30M23 9v33M33 10l-4 30"/></svg></div>
  </footer>
</div>
</body>
</html>
```
FILE: styles.css
```css
* { box-sizing: border-box; }
body { margin: 0; background: #000; font-family: Inter, "Liberation Sans", sans-serif; overflow: hidden; }
svg { display: block; flex: none; overflow: visible; }
.defs { position: absolute; }
.screen { position: relative; width: 1728px; height: 1080px; margin: 0 auto; display: flex; flex-direction: column; background: #1b1c1f; overflow: hidden; }

.backdrop { position: absolute; inset: 0; }
.backdrop > div { position: absolute; }
.behind-left { left: 0; top: 1010px; width: 200px; height: 29px; padding-top: 8px; background: #202123; border-bottom: 1px solid #444; color: #777; font-size: 14px; letter-spacing: .3px; }
.behind-wall { left: 0; top: 1040px; width: 96px; height: 40px; background: linear-gradient(160deg, #3c3f3f, #545957 60%, #303232); }
.behind-sheet { left: 351px; top: 1060px; width: 1153px; height: 20px; background: linear-gradient(90deg, #e8e8e8 0 64px, #5c6b9c 64px 65px, #d5d5da 65px 1090px, #b9c2c4 1090px); }
.behind-right { right: 0; top: 1010px; width: 60px; height: 51px; background: #2b2c2e; border-bottom: 1px solid #555; color: #888; font-size: 13px; display: flex; flex-direction: column; align-items: flex-end; justify-content: space-between; padding: 7px 0 3px; white-space: nowrap; }
.behind-right span { width: 42px; margin-right: -4px; }

.menubar { position: relative; height: 29px; flex: none; display: flex; align-items: center; background: linear-gradient(90deg, #c8cbc5, #d1d0c3 40%, #cfcfc4 70%, #c9cbc6); color: #22231f; font-size: 14.800px; padding-bottom: 1px; }
.apple { margin-left: 23px; width: 18px; margin-top: -3px; }
.menus { display: grid; grid-template-columns: 85px 50px 53px 60px 77px 105px 80px 51px 82px 60px; margin-left: 23px; letter-spacing: .15px; }
.menus b { font-weight: 700; letter-spacing: .35px; }
.status { position: absolute; left: 1092px; top: 0; height: 28px; display: grid; grid-template-columns: 44px 40px 44px 46px 44px 36px 52px 42px 40px 35px 44px 170px; align-items: center; justify-items: center; }
.la { background: #20211f; color: #ddd; font-size: 11px; font-weight: 700; border-radius: 3px; padding: 3px 2px; width: 20px; height: 20px; text-align: center; letter-spacing: -.3px; }
.spotlight { color: #222; }
.siri { width: 17px; height: 17px; border-radius: 50%; background: radial-gradient(circle, #dcecff 15%, transparent 40%), conic-gradient(#a84a88, #cd8d9c, #3b9eb5, #2d4b90, #55aaa5, #a84a88); }
.clock { justify-self: start; margin-left: 5px; white-space: nowrap; display: flex; gap: 10px; font-size: 15px; letter-spacing: .45px; }

.window { position: relative; height: 980px; flex: none; border-radius: 12px; overflow: hidden; background: #111217; display: flex; flex-direction: column; margin-top: 1px; }
.window::after { content: ""; position: absolute; inset: 0; border: 1px solid rgba(255,255,255,.2); border-radius: 12px; }
.tabstrip { height: 50px; flex: none; background: #6b2216; display: flex; align-items: center; color: #fff; }
.lights { display: flex; gap: 10px; width: 112px; padding-left: 25px; margin-top: 2px; }
.lights i { width: 14px; height: 14px; border-radius: 50%; background: #f37268; }
.lights i:nth-child(2) { background: #f8b943; }
.lights i:nth-child(3) { background: #4eb54a; }
.tab { align-self: flex-end; width: 287px; height: 41px; background: #a53225; border-radius: 9px 9px 0 0; display: flex; align-items: center; padding: 0 14px 0 15px; }
.tab span { width: 208px; margin: 0 12px 0 8px; white-space: nowrap; overflow: hidden; font-size: 13.300px; font-weight: 500; letter-spacing: .3px; mask-image: linear-gradient(90deg, #000 88%, transparent); }
.plus { margin: 9px 0 0 20px; }
.tabs-menu { margin: 9px 20px 0 auto; }
.toolbar { height: 45px; flex: none; background: #a53225; border-bottom: 1px solid #c4675d; display: grid; grid-template-columns: 38px 38px 39px 1445px 38px 38px 38px 38px; align-items: center; justify-items: center; padding-left: 7px; }
.address { justify-self: start; margin-left: 8px; width: 1430px; height: 32px; border-radius: 16px; background: #822d25; display: flex; align-items: center; padding: 0 12px 0 14px; font-size: 16px; color: #e5a69f; }
.address i { width: 1px; height: 19px; background: #a46158; margin: 0 11px 0 9px; }
.insecure { margin-left: 12px; color: #ceaaa6; font-size: 15.500px; letter-spacing: .65px; }
.url { letter-spacing: .38px; }
.url b { color: #fff; font-weight: 500; letter-spacing: .6px; }
.address-icons { margin-left: auto; display: flex; align-items: center; gap: 21px; color: #f0cdc8; }
.profile { width: 25px; height: 25px; border-radius: 50%; background: #7038a8; color: #eadcf6; font-size: 13px; display: grid; place-items: center; }

.app { flex: 1; display: flex; font-family: Roboto, "Liberation Sans", sans-serif; color: #ccccdc; }
.sidebar { width: 69px; background: #1a1b1f; border-right: 1px solid #222328; padding: 9px 0; display: flex; flex-direction: column; color: #9fa0a8; }
.sidebar > div { position: relative; height: 57.700px; display: grid; place-items: center; }
.sidebar .push { margin-top: auto; }
.current { color: #e4e4ee; }
.current::before { content: ""; position: absolute; left: 9px; top: 14px; width: 5px; height: 29px; border-radius: 2px; background: #ff8c4b; }
.expand { position: absolute; left: 52px; top: 42px; width: 29px; height: 29px; border-radius: 50%; background: #25262b; display: grid; place-items: center; z-index: 2; }
.round { border-radius: 50%; overflow: hidden; }
.content { flex: 1; padding: 14px 19px 0 19px; }
.topbar { height: 38px; display: flex; justify-content: space-between; align-items: center; }
.crumbs { display: flex; align-items: center; font-size: 21.500px; }
.folder { margin-left: 11px; width: 85px; letter-spacing: .3px; }
.dash { width: 77px; white-space: nowrap; }
.dash + svg { margin: 0 21px 0 0; }
.actions { display: flex; color: #9c9da6; }
.btn { width: 44px; height: 38px; border: 1px solid #26272c; border-radius: 2px; background: #17181d; display: flex; align-items: center; justify-content: center; margin-left: 9px; font-size: 16.800px; }
.btn b { font-weight: 500; letter-spacing: .25px; }
.btn.add { width: 51px; }
.btn.time { width: 180px; padding: 0 12px 0 11px; justify-content: flex-start; gap: 10px; }
.btn.time svg:last-child { margin-left: auto; margin-right: 4px; }
.btn.joined { margin-left: 0; border-left: 0; }
.btn.time + .joined { width: 42px; }
.btn.refresh { width: 43px; margin-left: 10px; }
.btn.rate { width: 63px; gap: 9px; padding-right: 5px; }

.panel { margin-top: 15px; width: 805px; height: 401px; border: 1px solid #24252a; background: #191a1e; }
.panel h2 { margin: 0; height: 38px; display: flex; align-items: center; justify-content: center; font-size: 16.800px; font-weight: 500; letter-spacing: .1px; gap: 7px; padding-left: 16px; }
.panel h2 svg { opacity: .7; }
.map { position: relative; height: 360px; overflow: hidden; }
.roadnames { fill: #2b2d2c; font-size: 9px; }
.markers { stroke-width: 3.500; stroke-opacity: .65; fill-opacity: .42; }
.g { fill: #73bf78; stroke: #86c58a; }
.r { fill: #f2495c; stroke: #e8505f; }
.y { fill: #fade2a; stroke: #f2e63a; stroke-opacity: .8; }
.zoomer { position: absolute; left: 11px; top: 12px; width: 25px; height: 49px; display: flex; flex-direction: column; gap: 1px; }
.zoomer span { flex: 1; display: grid; place-items: center; background: #303135; color: #dcdce4; font-size: 19px; font-weight: 700; line-height: 1; }
.legend { position: absolute; left: 9px; bottom: 10px; width: 180px; height: 95px; background: #242529; border-bottom: 2px solid #6e6f73; padding: 11px 10px; font-size: 14.500px; }
.legend h3 { margin: 0 0 8px; font-size: 16.500px; line-height: 21px; font-weight: 400; letter-spacing: .3px; }
.legend p { margin: 0; height: 21.500px; display: flex; align-items: center; padding-left: 12px; }
.legend i { width: 18px; height: 18px; border-radius: 50%; margin-right: 10px; }
.green { background: #6d9565; }
.red { background: #bd5255; }
.info { position: absolute; right: 11px; bottom: 11px; width: 24px; height: 24px; background: #303135; color: #e4e4ea; display: grid; place-items: center; font-weight: 700; font-size: 17px; }
.resize { position: absolute; right: 2px; bottom: 3px; width: 6px; height: 6px; border: solid #a0a0a8; border-width: 0 2px 2px 0; }
.cursor { position: absolute; left: 615px; top: 124px; }

.dock { position: relative; width: 1653px; height: 59px; margin: 5px 0 0 38px; border-radius: 17px; border: 1px solid #5c5d5e; display: flex; align-items: flex-start; padding: 8px 0 0 2px; background: linear-gradient(90deg, #2c2d2d, #303030 200px, #505050 330px, #595959 700px, #595959 1290px, #3b3b3c 1350px, #393a3b); }
.dock > div { width: 48.550px; height: 50px; display: grid; justify-content: center; position: relative; flex: none; }
.dock svg { width: 37px; height: 37px; font-family: Inter, "Liberation Sans", sans-serif; }
.dock text { text-anchor: middle; }
.dock svg.big { width: 45px; height: 45px; margin-top: -4px; }
.dock .on::after { content: ""; position: absolute; left: 22px; top: 43px; width: 5px; height: 5px; border-radius: 50%; background: #d5d5d5; }
.dock hr { width: 2px; height: 42px; margin: 0 8px 0 12px; border: 0; background: #757677; flex: none; }
```
